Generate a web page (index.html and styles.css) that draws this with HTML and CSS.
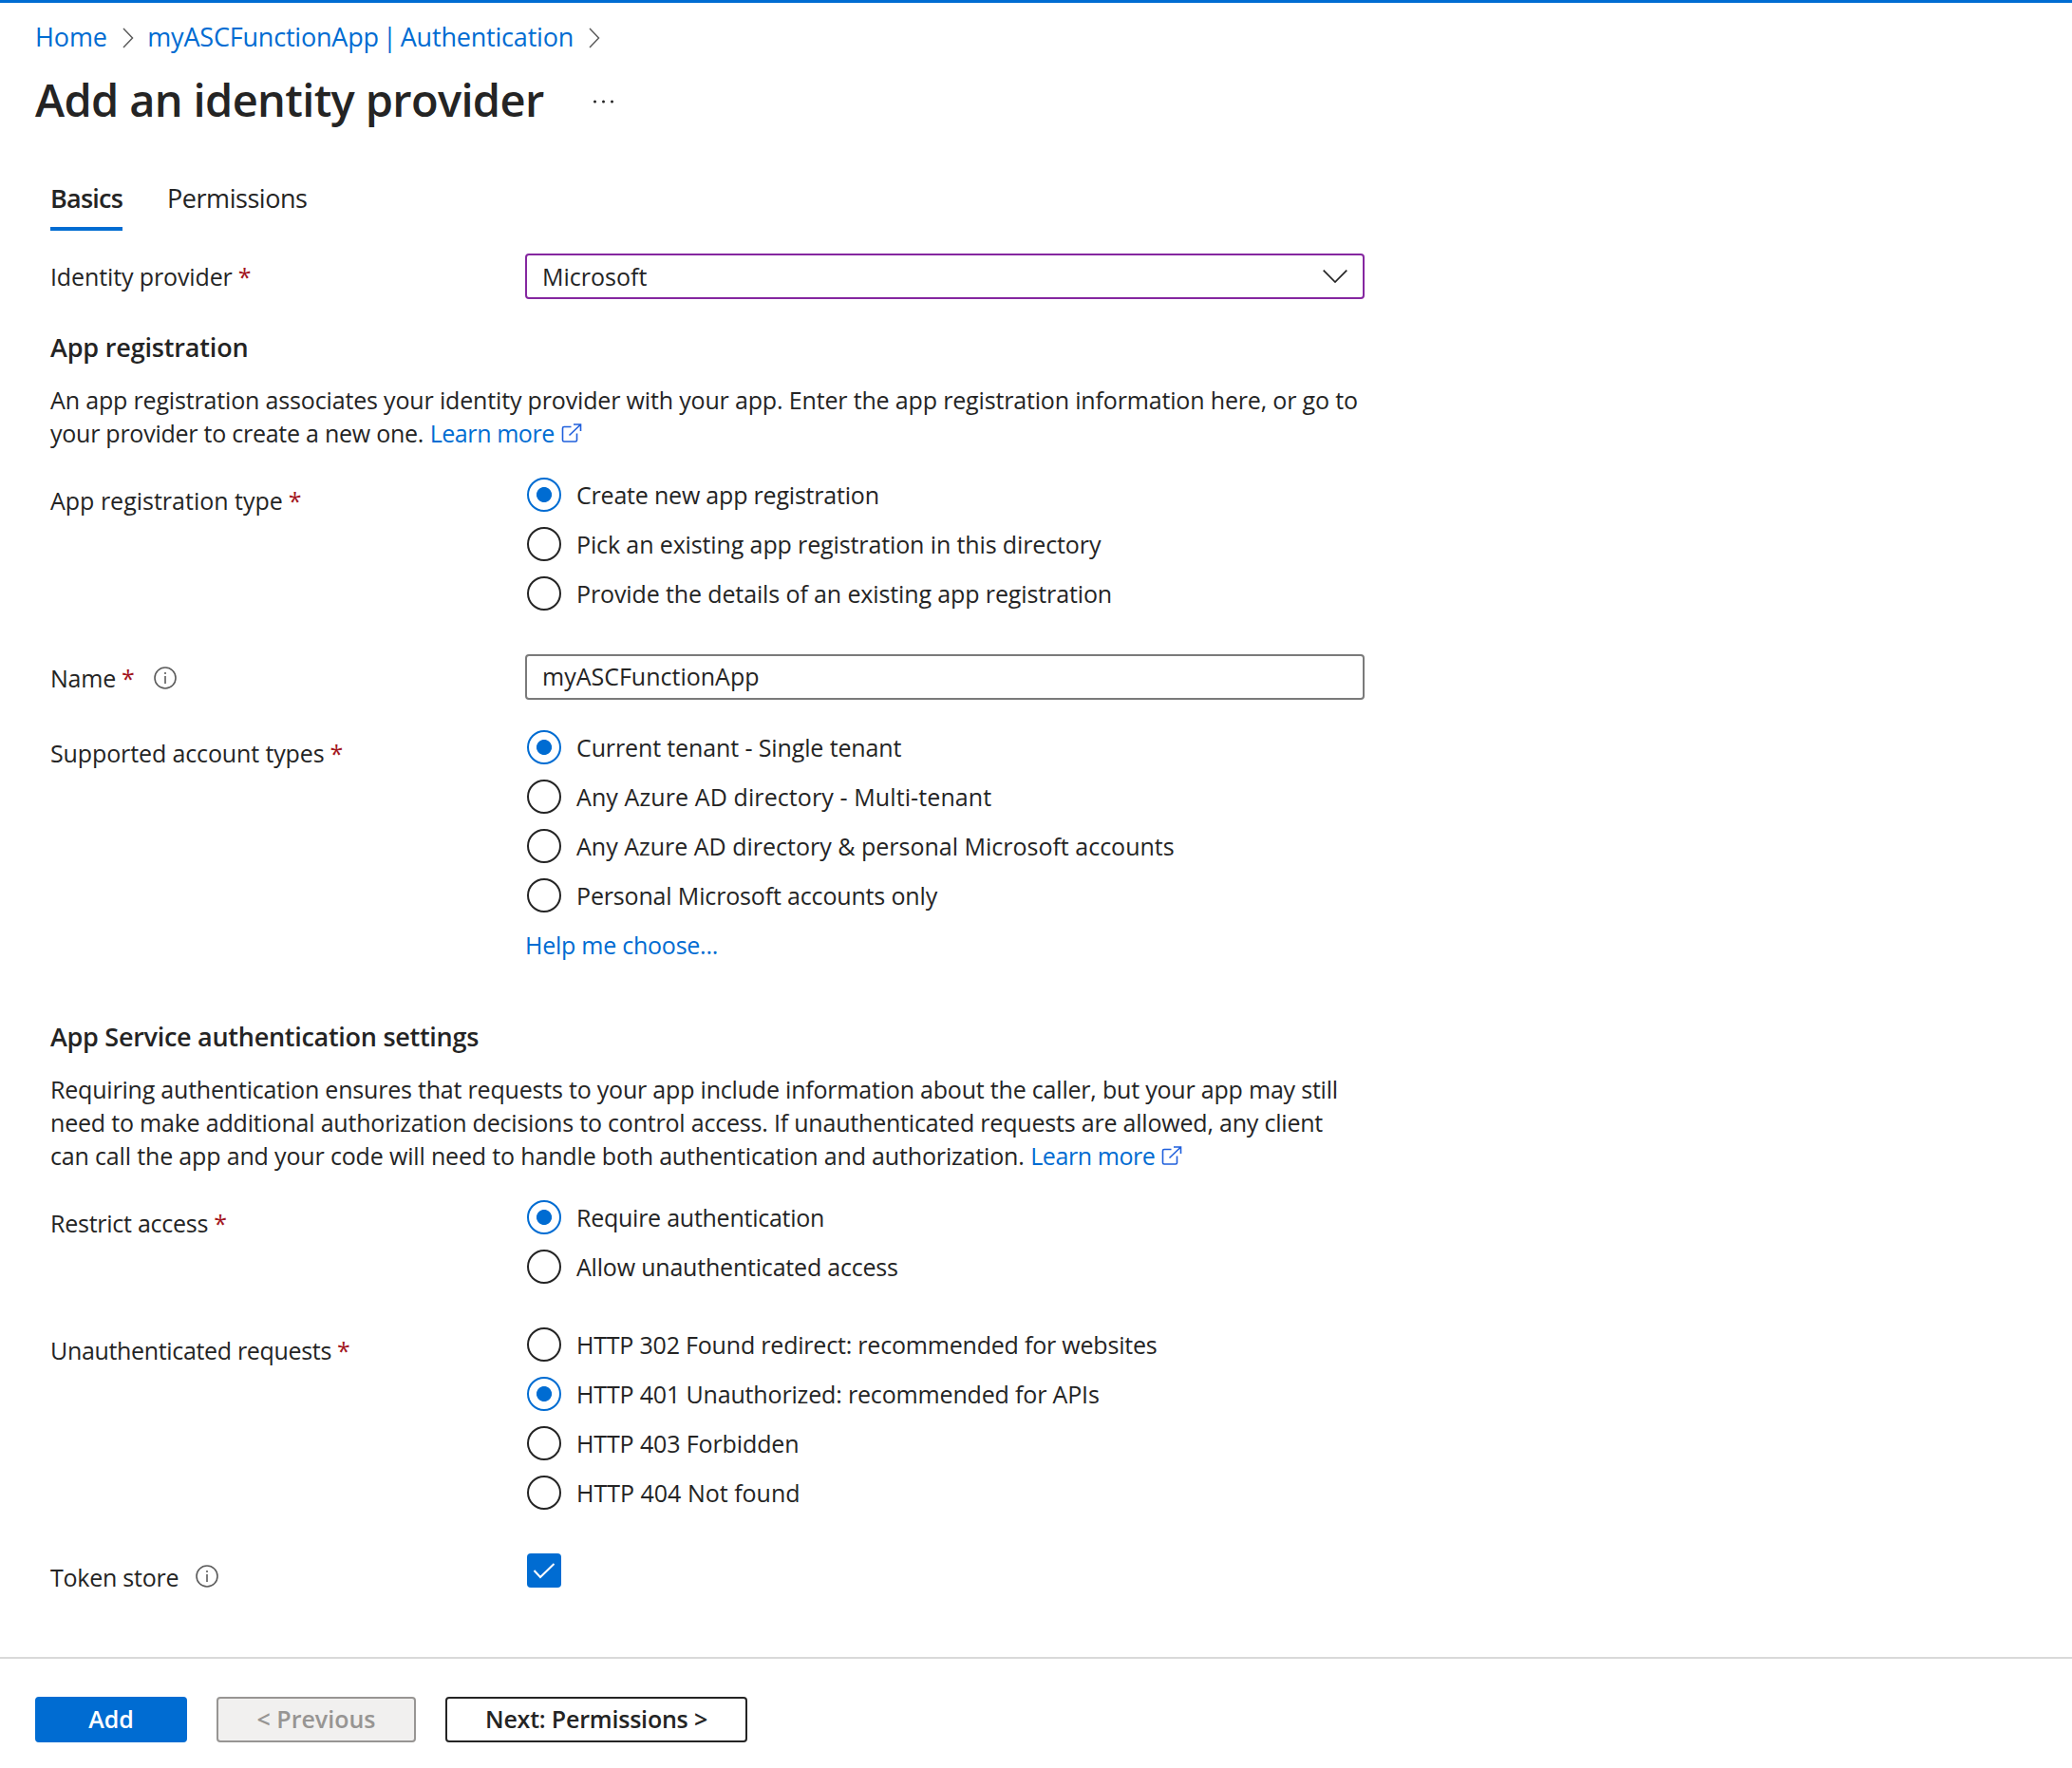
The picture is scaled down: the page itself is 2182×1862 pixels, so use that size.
FILE: index.html
```html
<!DOCTYPE html>
<html lang="en">
<head>
<meta charset="utf-8">
<title>Add an identity provider</title>
<link rel="stylesheet" href="styles.css">
</head>
<body>
<header class="page-head">
  <nav class="crumbs">
    <a class="t1" href="#">Home</a>
    <svg class="crumb-sep" viewBox="0 0 12 22"><path d="M1 1l9.5 10L1 21"/></svg>
    <a class="crumb-app" href="#">myASCFunctionApp | Authentication</a>
    <svg class="crumb-sep" viewBox="0 0 12 22"><path d="M1 1l9.5 10L1 21"/></svg>
  </nav>
  <div class="title-row">
    <h1 class="title">Add an identity provider</h1>
    <svg class="more" viewBox="0 0 24 4"><circle cx="2.5" cy="2" r="1.5"/><circle cx="11.5" cy="2" r="1.5"/><circle cx="20.5" cy="2" r="1.5"/></svg>
  </div>
</header>
<main class="form">
  <div class="tabs">
    <a class="tab tab-active" href="#">Basics</a>
    <a class="tab" href="#">Permissions</a>
  </div>

  <section class="row row-idp">
    <div class="label"><span class="t1">Identity provider</span><span class="req">*</span></div>
    <div class="select"><span>Microsoft</span><svg class="caret" viewBox="0 0 26 14"><path d="M.7.7L13 13 25.300.7"/></svg></div>
  </section>

  <h2 class="heading heading-first">App registration</h2>
  <p class="para"><span class="t15">An app registration associates your identity provider with your app. Enter the app registration information here, or go to</span><br><span class="t25">your provider to create a new one.</span> <a class="learn" href="#">Learn more<svg class="ext" viewBox="0 0 22 20"><path d="M10.500 3.500H3A1.500 1.500 0 0 0 1.500 5v12.500A1.500 1.500 0 0 0 3 19h12a1.500 1.500 0 0 0 1.500-1.500V10.500M13 1h7.500V8M20.500 1L8.500 12.500"/></svg></a></p>

  <section class="row row-para">
    <div class="label"><span>App registration type</span><span class="req">*</span></div>
    <div class="options">
      <label class="opt"><i class="radio on"></i><span class="t2">Create new app registration</span></label>
      <label class="opt"><i class="radio"></i><span class="t1">Pick an existing app registration in this directory</span></label>
      <label class="opt"><i class="radio"></i><span class="t1">Provide the details of an existing app registration</span></label>
    </div>
  </section>

  <section class="row row-group">
    <div class="label label-name"><span class="t2">Name</span><span class="req">*</span><svg class="info" viewBox="0 0 24 24"><circle cx="12" cy="12" r="11"/><path d="M12 10v8M12 6v2"/></svg></div>
    <div class="field">myASCFunctionApp</div>
  </section>

  <section class="row row-tight">
    <div class="label"><span class="t1">Supported account types</span><span class="req">*</span></div>
    <div class="options">
      <label class="opt"><i class="radio on"></i><span class="t1">Current tenant - Single tenant</span></label>
      <label class="opt"><i class="radio"></i><span class="wide">Any Azure AD directory - Multi-tenant</span></label>
      <label class="opt"><i class="radio"></i><span>Any Azure AD directory &amp; personal Microsoft accounts</span></label>
      <label class="opt"><i class="radio"></i><span class="t15">Personal Microsoft accounts only</span></label>
      <a class="t25" href="#">Help me choose...</a>
    </div>
  </section>

  <h2 class="heading heading-second">App Service authentication settings</h2>
  <p class="para"><span class="t2">Requiring authentication ensures that requests to your app include information about the caller, but your app may still</span><br><span class="t2">need to make additional authorization decisions to control access. If unauthenticated requests are allowed, any client</span><br><span class="t15">can call the app and your code will need to handle both authentication and authorization.</span> <a class="learn" href="#">Learn more<svg class="ext" viewBox="0 0 22 20"><path d="M10.500 3.500H3A1.500 1.500 0 0 0 1.500 5v12.500A1.500 1.500 0 0 0 3 19h12a1.500 1.500 0 0 0 1.500-1.500V10.500M13 1h7.500V8M20.500 1L8.500 12.500"/></svg></a></p>

  <section class="row row-para">
    <div class="label"><span class="t25">Restrict access</span><span class="req">*</span></div>
    <div class="options">
      <label class="opt"><i class="radio on"></i><span class="t25">Require authentication</span></label>
      <label class="opt"><i class="radio"></i><span class="t2">Allow unauthenticated access</span></label>
    </div>
  </section>

  <section class="row row-group">
    <div class="label"><span class="t3">Unauthenticated requests</span><span class="req">*</span></div>
    <div class="options">
      <label class="opt"><i class="radio"></i><span class="t2">HTTP 302 Found redirect: recommended for websites</span></label>
      <label class="opt"><i class="radio on"></i><span class="t15">HTTP 401 Unauthorized: recommended for APIs</span></label>
      <label class="opt"><i class="radio"></i><span class="t1">HTTP 403 Forbidden</span></label>
      <label class="opt"><i class="radio"></i><span>HTTP 404 Not found</span></label>
    </div>
  </section>

  <section class="row row-group">
    <div class="label label-name"><span class="t25">Token store</span><svg class="info info-token" viewBox="0 0 24 24"><circle cx="12" cy="12" r="11"/><path d="M12 10v8M12 6v2"/></svg></div>
    <div class="options"><svg class="check" viewBox="0 0 36 36"><path d="M7.500 18l6.500 7L28.500 11"/></svg></div>
  </section>
</main>
<footer class="actions">
  <a class="btn btn-primary" href="#">Add</a>
  <a class="btn btn-disabled">&lt; Previous</a>
  <a class="btn btn-next" href="#">Next: Permissions &gt;</a>
</footer>
</body>
</html>
```
FILE: styles.css
```css
body {
  margin: 0;
  background: #fff;
  border-top: 3px solid #006cd2;
  color: #242424;
  font: 25px/36px "Open Sans", sans-serif;
}
a { color: #006cd2; text-decoration: none; }
svg { fill: none; flex: none; }
h1, h2, p { margin: 0; }

/* tracking steps */
.wide { letter-spacing: .1px; }
.t1 { letter-spacing: -.12px; }
.t15 { letter-spacing: -.16px; }
.t2 { letter-spacing: -.2px; }
.t25 { letter-spacing: -.25px; }
.t3 { letter-spacing: -.33px; }

.page-head { padding: 17px 0 0 37px; }
.crumbs { display: flex; align-items: center; font-size: 27px; line-height: 37px; }
.crumb-app { letter-spacing: -.2px; word-spacing: -2.7px; }
.crumb-sep { width: 12px; height: 22px; margin: 3px 14.5px 0 16px; stroke: #5c5c5c; stroke-width: 1.5; }
.title-row { display: flex; align-items: center; gap: 51px; margin-top: 16px; }
.title { font-size: 47px; line-height: 64px; font-weight: 600; letter-spacing: -.65px; }
.more { width: 24px; height: 4px; margin-top: 4px; fill: #242424; }

.form { padding: 53px 0 0 53px; }
.tabs { display: flex; gap: 47px; font-size: 27px; line-height: 37px; letter-spacing: -.45px; }
.tab { padding-bottom: 12px; border-bottom: 4px solid transparent; color: #242424; }
.tab-active { border-color: #006cd2; font-weight: 600; letter-spacing: -.78px; }

.row { display: grid; grid-template-columns: 500px 884px; align-items: start; }
.row-idp { margin-top: 24px; }
.row-para { margin-top: 29px; }
.row-group { margin-top: 46px; }
.row-tight { margin-top: 32px; }

.label { display: flex; padding-top: 6px; }
.label-name { padding-top: 7px; }
.req { margin-left: 6px; color: #a31621; font-weight: 500; }
.info { width: 24px; height: 24px; margin: 6px 0 0 20px; stroke: #5c5c5c; stroke-width: 1.6; }
.info-token { margin: 5px 0 0 18px; }

.select, .field {
  display: flex; align-items: center; justify-content: space-between;
  box-sizing: border-box; height: 48px; padding: 0 16px;
  border: 2px solid #7a7a7a; border-radius: 4px;
}
.select { border-color: #8527a0; }
.field { padding-bottom: 2px; }
.caret { width: 26px; height: 14px; stroke: #242424; stroke-width: 1.7; }

.heading { font-size: 27px; line-height: 37px; font-weight: 600; }
.heading-first { margin-top: 32px; letter-spacing: -.17px; }
.heading-second { margin-top: 60px; letter-spacing: -.28px; }
.para { margin-top: 20px; line-height: 35px; white-space: nowrap; }
.learn { letter-spacing: -.42px; }
.ext { width: 22px; height: 20px; margin-left: 7px; stroke: #1f5fdc; stroke-width: 1.6; }

.options { display: flex; flex-direction: column; gap: 16px; }
.opt { display: flex; gap: 16px; padding-left: 2px; white-space: nowrap; }
.radio { box-sizing: border-box; width: 36px; height: 36px; border: 2px solid #242424; border-radius: 50%; }
.on { border-color: #006cd2; background: radial-gradient(circle, #006cd2 7.600px, #fff 8.400px); }
.check { width: 36px; height: 36px; margin-left: 2px; border-radius: 4px; background: #006cd2; stroke: #fff; stroke-width: 2; }

.actions { display: flex; margin-top: 66px; padding: 40px 0 27px 37px; border-top: 2px solid #d9d9d9; font-weight: 600; }
.btn { box-sizing: border-box; height: 48px; line-height: 42px; border: 2px solid; border-radius: 4px; text-align: center; }
.btn-primary { width: 160px; border-color: #006cd2; background: #006cd2; color: #fff; }
.btn-disabled { width: 210px; margin-left: 31px; border-color: #979593; background: #f1f0ef; color: #979593; }
.btn-next { width: 318px; margin-left: 31px; border-color: #242424; color: #242424; letter-spacing: -.2px; }
```
